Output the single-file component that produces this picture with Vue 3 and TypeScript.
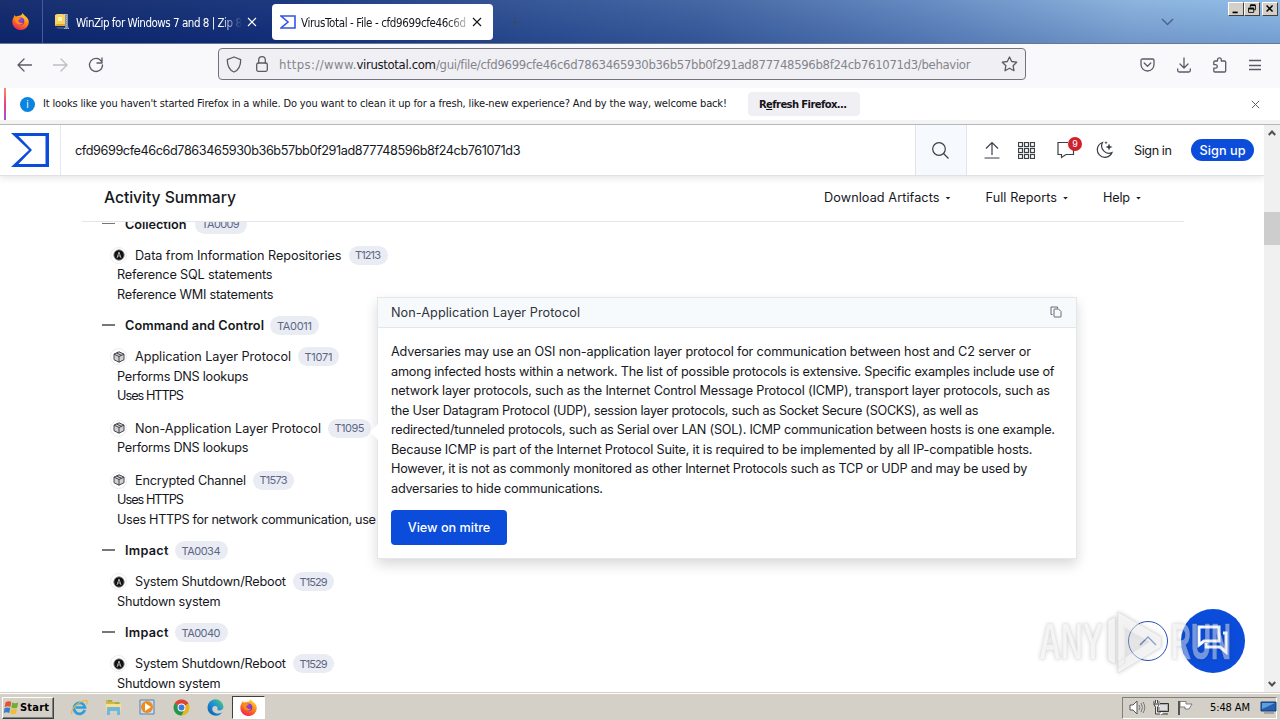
<script setup lang="ts">
import type { Directive } from 'vue'

interface Technique { icon: 'cube' | 'mark'; name: string; w: number; id: string; bw: number; gap: number; notes: [string, number][] }
interface Tactic { name: string; w: number; id: string; bw: number; gap: number; techniques: Technique[] }

// Tracks a label so that its glyphs fill the given width in pixels.
const vTrack: Directive<HTMLElement, number> = {
  mounted(el, { value }) {
    const natural = el.getBoundingClientRect().width
    const count = (el.textContent ?? '').length
    if (count > 1) el.style.letterSpacing = `${((value - natural) / (count - 1)).toFixed(3)}px`
    el.style.width = `${value}px`
  },
}

const reboot: Technique = { icon: 'mark', name: 'System Shutdown/Reboot', w: 151, id: 'T1529', bw: 41, gap: 7, notes: [['Shutdown system', 103.5]] }

const tactics: Tactic[] = [
  {
    name: 'Collection', w: 61.5, id: 'TA0009', bw: 52, gap: 8,
    techniques: [
      { icon: 'mark', name: 'Data from Information Repositories', w: 206.5, id: 'T1213', bw: 39, gap: 7, notes: [['Reference SQL statements', 155.5], ['Reference WMI statements', 156.5]] },
    ],
  },
  {
    name: 'Command and Control', w: 139, id: 'TA0011', bw: 49, gap: 6,
    techniques: [
      { icon: 'cube', name: 'Application Layer Protocol', w: 156, id: 'T1071', bw: 41, gap: 7, notes: [['Performs DNS lookups', 131.5], ['Uses HTTPS', 67]] },
      { icon: 'cube', name: 'Non-Application Layer Protocol', w: 186, id: 'T1095', bw: 43, gap: 7, notes: [['Performs DNS lookups', 131.5]] },
      { icon: 'cube', name: 'Encrypted Channel', w: 111, id: 'T1573', bw: 41, gap: 7, notes: [['Uses HTTPS', 67], ['Uses HTTPS for network communication, use', 259]] },
    ],
  },
  { name: 'Impact', w: 43.5, id: 'TA0034', bw: 53, gap: 6, techniques: [reboot] },
  { name: 'Impact', w: 43.5, id: 'TA0040', bw: 53, gap: 6, techniques: [reboot] },
]

const paragraph: [string, number][] = [
  ['Adversaries may use an OSI non-application layer protocol for communication between host and C2 server or', 640],
  ['among infected hosts within a network. The list of possible protocols is extensive. Specific examples include use of', 663.5],
  ['network layer protocols, such as the Internet Control Message Protocol (ICMP), transport layer protocols, such as', 659],
  ['the User Datagram Protocol (UDP), session layer protocols, such as Socket Secure (SOCKS), as well as', 587.5],
  ['redirected/tunneled protocols, such as Serial over LAN (SOL). ICMP communication between hosts is one example.', 664],
  ['Because ICMP is part of the Internet Protocol Suite, it is required to be implemented by all IP-compatible hosts.', 641.5],
  ['However, it is not as commonly monitored as other Internet Protocols such as TCP or UDP and may be used by', 636.5],
  ['adversaries to hide communications.', 212],
]

const menus: [string, number][] = [['Download Artifacts', 115.5], ['Full Reports', 71.5], ['Help', 27]]
</script>

<template>
  <div class="screen">
    <svg class="defs" width="0" height="0">
      <defs>
        <linearGradient id="flame" x1="0.8" y1="0" x2="0.3" y2="1"><stop offset="0" stop-color="#ffe23e" /><stop offset="0.45" stop-color="#ff8a16" /><stop offset="1" stop-color="#ee2050" /></linearGradient>
        <radialGradient id="globe" cx="0.5" cy="0.3" r="0.8"><stop offset="0" stop-color="#a244d8" /><stop offset="1" stop-color="#5b2ec0" /></radialGradient>
        <linearGradient id="wave" x1="0" y1="1" x2="1" y2="0"><stop offset="0" stop-color="#0c59a4" /><stop offset="0.5" stop-color="#1b8ed8" /><stop offset="1" stop-color="#54d06a" /></linearGradient>
        <symbol id="fox" viewBox="0 0 16 16">
          <path d="M8.600 2.200C9.300 1.400 9.500.8 10.200 0c.3 1.500 1.300 2.100 2.500 3.100 1.800 1.400 3.100 3 3.100 5.500A7.700 7.400 0 0 1 .3 8.600C.2 6.500 1 4.700 2 3.300l.2-1.500 1.500 1.400Z" fill="url(#flame)" />
          <circle cx="8" cy="7.800" r="3.500" fill="url(#globe)" />
          <path d="M2 4.500c1.300-1 2.800-.9 3.700 0l2.500.3c-.3 1.300-2.100 1.300-2.300 2.500.8 1.800 2.600 2.600 4.600 1.600-1.200 2.900-5.600 2.700-6.900-.4Z" fill="#ff8b1a" />
        </symbol>
        <symbol id="cross" viewBox="0 0 10 10"><path d="M1 1l8 8M9 1L1 9" fill="none" stroke="currentColor" stroke-width="1.100" /></symbol>
        <symbol id="sigma" viewBox="0 0 38 34"><path d="M0 0h38v34H0l18-17ZM7.500 3l13.500 14L7.500 31H34.500V3Z" fill="currentColor" fill-rule="evenodd" /></symbol>
      </defs>
    </svg>

    <div class="tabs">
      <div class="pinned"><svg width="17" height="17"><use href="#fox" /></svg></div>
      <div class="tab idle">
        <svg width="17" height="17" viewBox="0 0 17 17"><path d="M1 2h10v11H1Z" fill="#e2a92f" /><path d="M1 2l2-1h8v10H3l-2 1Z" fill="#f7d264" /><path d="M4 4h4v4H4Z" fill="#fff2ad" /><path d="M2 14h9v2H4Z" fill="#667995" opacity=".5" /><path d="M11 1h3v12l1 3h-4Z" fill="#7f90ac" /><path d="M12.500 1v14M9 1.500h4M10 15.500h6" stroke="#a9b5c8" stroke-dasharray="1 1" /></svg>
        <span class="tab-text"><span v-track="166">WinZip for Windows 7 and 8 | Zip 8</span></span>
        <svg width="10" height="10"><use href="#cross" /></svg>
      </div>
      <div class="tab active">
        <svg class="vt" width="16" height="14" viewBox="0 0 16 14"><path d="M1 1h14v12H1l7-6Z" fill="none" stroke="#3554e8" stroke-width="1.600" /></svg>
        <span class="tab-text"><span v-track="165">VirusTotal - File - cfd9699cfe46c6d</span></span>
        <svg width="10" height="10"><use href="#cross" /></svg>
      </div>
      <svg class="plus" width="10" height="10" viewBox="0 0 10 10"><path d="M5 0v10M0 5h10" stroke="#3b496c" stroke-width="1.200" /></svg>
      <svg class="tabs-more" width="13" height="8" viewBox="0 0 13 8"><path d="M1 1l5.500 5.500L12 1" fill="none" stroke="#4c648f" stroke-width="1.500" /></svg>
      <div class="window-buttons">
        <svg width="16" height="14" viewBox="0 0 16 14"><path d="M4 11h6" stroke="#000" stroke-width="2" /></svg>
        <svg width="16" height="14" viewBox="0 0 16 14"><path d="M6 5V3h6v5h-2M6 3h6M4 6h6v5H4Z" fill="none" stroke="#000" /><path d="M6 2.500h6M4 6.500h6" stroke="#000" stroke-width="2" /></svg>
        <svg width="16" height="14" viewBox="0 0 16 14"><path d="M4 3l7 7M11 3l-7 7" stroke="#000" stroke-width="1.800" /></svg>
      </div>
    </div>

    <div class="toolbar">
      <svg class="back" width="15" height="14" viewBox="0 0 15 14"><path d="M14.500 7H1M7 1L1 7l6 6" /></svg>
      <svg class="forward" width="15" height="14" viewBox="0 0 15 14"><path d="M0 7h14M8 1l6 6-6 6" /></svg>
      <svg class="reload" width="16" height="16" viewBox="0 0 16 16"><path d="M13.500 4.500A6.500 6.500 0 1 0 14.500 8M14 1v5H9" /></svg>
      <div class="address">
        <svg width="16" height="17" viewBox="0 0 16 17"><path d="M8 1l6.700 2.700C14.700 9.500 12.800 14 8 16 3.200 14 1.300 9.500 1.300 3.700Z" /></svg>
        <svg class="lock" width="12" height="16" viewBox="0 0 12 16"><rect x=".7" y="7" width="10.600" height="8.300" rx="1.500" /><path d="M2.700 7V4a3.300 3.300 0 0 1 6.600 0v3" /></svg>
        <span class="url"><span v-track="77.500">https://www.</span><b v-track="79.500">virustotal.com</b><span v-track="534.500">/gui/file/cfd9699cfe46c6d7863465930b36b57bb0f291ad877748596b8f24cb761071d3/behavior</span></span>
        <svg class="star" width="17" height="16" viewBox="0 0 17 16"><path d="M8.500 1l2.200 4.500 5 .7-3.600 3.500.9 5-4.500-2.400L4 14.700l.9-5L1.300 6.200l5-.7Z" /></svg>
      </div>
      <div class="tools">
        <svg width="15" height="14" viewBox="0 0 15 14"><path d="M2.500 1h10q1.500 0 1.500 1.500V6.500a6.500 6.500 0 0 1-13 0V2.500Q1 1 2.500 1ZM4.200 5l3.300 3.200L10.800 5" /></svg>
        <svg width="14" height="16" viewBox="0 0 14 16"><path d="M7 1v10M3 7l4 4 4-4M.7 12v1.500q0 1.500 1.500 1.500h9.600q1.500 0 1.500-1.500V12" /></svg>
        <svg width="15" height="16" viewBox="0 0 15 16"><path d="M5.500 4V2.700a1.900 1.900 0 0 1 3.800 0V4h3.200q1.200 0 1.200 1.200v8.600q0 1.200-1.200 1.200H3q-1.200 0-1.200-1.200v-2.600h1.700a1.600 1.600 0 0 0 0-3.600H1.800V5.200Q1.800 4 3 4Z" /></svg>
        <svg width="12" height="12" viewBox="0 0 12 12"><path d="M0 1.500h12M0 6.500h12M0 10.500h12" /></svg>
      </div>
    </div>

    <div class="notice">
      <div class="info">i</div>
      <span class="message" v-track="684">It looks like you haven't started Firefox in a while. Do you want to clean it up for a fresh, like-new experience? And by the way, welcome back!</span>
      <div class="refresh"><span v-track="88">R<u>e</u>fresh Firefox...</span></div>
      <svg width="9" height="9"><use href="#cross" /></svg>
    </div>
    <div class="seam"></div>

    <div class="page">
      <div class="site">
        <header class="top">
          <div class="logo"><svg width="38" height="34"><use href="#sigma" /></svg></div>
          <span class="hash" v-track="445.500">cfd9699cfe46c6d7863465930b36b57bb0f291ad877748596b8f24cb761071d3</span>
          <div class="search"><svg width="17" height="17" viewBox="0 0 17 17"><circle cx="7" cy="7" r="6.300" /><path d="M11.500 11.500l5 5" /></svg></div>
          <svg class="up" width="16" height="18" viewBox="0 0 16 18"><path d="M8 14V1.500M2 7.500l6-6 6 6M.5 17h15" /></svg>
          <svg class="grid" width="17" height="17" viewBox="0 0 17 17"><g v-for="r in 3" :key="r"><rect v-for="c in 3" :key="c" :x="c * 6 - 5.500" :y="r * 6 - 5.500" width="4" height="4" /></g></svg>
          <div class="comments">
            <svg width="18" height="18" viewBox="0 0 18 18"><path d="M11 1.500H1v12h3.500v3L9 13.500h7.500V9" /></svg>
            <span class="count">9</span>
          </div>
          <svg class="moon" width="17" height="18" viewBox="0 0 17 18"><path d="M6.500 1.500A7.600 7.600 0 1 0 16 11.500 7.300 7.300 0 0 1 6.500 1.500Z" /><path class="solid" d="M13 2.500l1 2.500 2.500 1L14 7l-1 2.500L12 7 9.500 6 12 5ZM10 0l.5 1.200 1.200.5-1.200.5L10 3.400l-.5-1.200-1.200-.5 1.200-.5Z" /></svg>
          <span class="signin" v-track="38">Sign in</span>
          <div class="signup"><span v-track="46">Sign up</span></div>
        </header>

        <div class="summary">
          <span class="title" v-track="132">Activity Summary</span>
          <div class="menus">
            <div v-for="[label, w] in menus" :key="label" class="menu"><span v-track="w">{{ label }}</span><i class="caret"></i></div>
          </div>
        </div>

        <main class="behavior">
          <section v-for="t in tactics" :key="t.id" class="tactic">
            <div class="tactic-row">
              <i class="dash"></i>
              <span class="tactic-name" v-track="t.w">{{ t.name }}</span>
              <div class="badge" :style="{ width: t.bw + 'px', marginLeft: t.gap + 'px' }"><span v-track="t.bw - 14">{{ t.id }}</span></div>
            </div>
            <div v-for="q in t.techniques" :key="q.id" class="technique">
              <div class="technique-row">
                <span class="source">
                  <svg v-if="q.icon === 'cube'" width="12" height="12" viewBox="0 0 12 12"><path d="M6 .8l5 2.300v5.600l-5 2.500-5-2.500V3.100Z" fill="#d0d0d3" /><path d="M1 3.100l5 2.400 5-2.400M6 5.500v5.700M3.500 2l5 2.300" /></svg>
                  <svg v-else width="12" height="12" viewBox="0 0 12 12"><circle cx="6" cy="6" r="5.200" class="disc" /><path class="letter" d="M4 9l2-6 2 6M4.700 7h2.600" /></svg>
                </span>
                <span v-track="q.w">{{ q.name }}</span>
                <div class="badge" :style="{ width: q.bw + 'px', marginLeft: q.gap + 'px' }"><span v-track="q.bw - 13">{{ q.id }}</span></div>
              </div>
              <div v-for="[note, w] in q.notes" :key="note" class="note"><span v-track="w">{{ note }}</span></div>
            </div>
          </section>
        </main>

        <aside class="popover">
          <div class="popover-head">
            <span v-track="189">Non-Application Layer Protocol</span>
            <svg width="12" height="12" viewBox="0 0 12 12"><path d="M4 3.500q0-.5.500-.5H8.500L11 5.500v5q0 .5-.5.500h-6q-.5 0-.5-.5ZM2.500 8.500H1V1h6.500v1.500" /></svg>
          </div>
          <div class="popover-body">
            <div v-for="[line, w] in paragraph" :key="line" class="line"><span v-track="w">{{ line }}</span></div>
            <div class="mitre"><span v-track="82.500">View on mitre</span></div>
          </div>
          <i class="beak"></i>
        </aside>

        <div class="chat"><svg width="32" height="30" viewBox="0 0 32 30"><path d="M2 2h20v14H7l-5 4Z" /><path d="M26 8h3v19l-6-5H9v-4" /></svg></div>
        <div class="to-top"><svg width="18" height="10" viewBox="0 0 18 10"><path d="M1 9l8-8 8 8" /></svg></div>
        <svg class="watermark" width="200" height="70" viewBox="0 0 200 70">
          <text x="4" y="51" textLength="64" lengthAdjust="spacingAndGlyphs">ANY</text>
          <text x="136" y="51" textLength="60" lengthAdjust="spacingAndGlyphs">RUN</text>
          <path d="M73 13l7-4v47l-7-4ZM83 4l43 25v10L83 65V54l31-20-24-14v35l-7 5Z" />
          <path class="play" d="M88 17l25 17-25 17Z" />
        </svg>
      </div>
      <div class="scrollbar">
        <svg class="arrow" width="8" height="6" viewBox="0 0 8 6"><path d="M.8 5L4 1.500 7.200 5" /></svg>
        <div class="thumb"></div>
        <svg class="arrow down" width="8" height="6" viewBox="0 0 8 6"><path d="M.8 1L4 4.500 7.200 1" /></svg>
      </div>
    </div>

    <footer class="taskbar">
      <div class="start">
        <svg width="15" height="15" viewBox="0 0 15 15"><path d="M1.500 2.500Q4.500.5 7.300 2L6.400 7Q3.500 5.500.7 7.300Z" fill="#e5532d" /><path d="M8.200 2.500q3 1.500 6 0L13.300 7.500q-3 1.700-6 0Z" fill="#73ad35" /><path d="M.5 8.300Q3.500 6.700 6.200 8l-.9 5Q2.500 11.500-.2 13Z" fill="#377fc5" /><path d="M7.100 8.500q3 1.700 6 0l-.9 5q-3 1.600-6 0Z" fill="#f1bd35" /></svg>
        <span v-track="29">Start</span>
      </div>
      <svg class="app" width="17" height="17" viewBox="0 0 17 17"><path d="M13.800 11A5.500 5.500 0 1 1 14 8.500H5" fill="none" stroke="#2d9edc" stroke-width="2.700" /><path d="M1 15C-1 12 6 3 14 1.500c3-.5 2.500 2 1 4" fill="none" stroke="#e9b93d" stroke-width="1.200" /></svg>
      <svg class="app" width="17" height="17" viewBox="0 0 17 17"><path d="M1 3V1h6l1 2h7v5H1Z" fill="#d9b248" /><path d="M1 5h15v7H1Z" fill="#f7df8d" /><path d="M3 2h4M10 4h4" stroke="#78b850" stroke-width="1.500" /><path d="M2 16V9q0-1 1-1h11q1 0 1 1v7h-3v-4H5v4Z" fill="#6fb8dc" /></svg>
      <svg class="app" width="17" height="17" viewBox="0 0 17 17"><path d="M1 1h14v14H1Z" fill="#c8dff1" stroke="#4c83b9" /><circle cx="8" cy="8" r="6" fill="#f28a18" /><path d="M6 4l6 4-6 4Z" fill="#fff" /></svg>
      <svg class="app" width="17" height="17" viewBox="0 0 16 16"><circle cx="8" cy="8" r="7.500" fill="#e7b719" /><path d="M8 8L1.500 4.300A7.500 7.500 0 0 1 14.500 4.300Z" fill="#db4437" /><path d="M8 8L1.500 4.300A7.500 7.500 0 0 0 8 15.500L11 9.500Z" fill="#23964d" /><circle cx="8" cy="8" r="3.700" fill="#fff" /><circle cx="8" cy="8" r="2.800" fill="#3e79e8" /></svg>
      <svg class="app" width="17" height="17" viewBox="0 0 16 16"><path d="M.5 8a7.500 7.500 0 0 1 15-.5c0 3-4.500 4.200-5.800 2.500.8-1.500 0-3.500-2.200-3.500-2.500 0-3.500 3.200-1.500 5.500 2.200 2.300 5.500 2 8.300.4A7.600 7.600 0 0 1 .5 8Z" fill="url(#wave)" /></svg>
      <div class="running"><svg width="17" height="17"><use href="#fox" /></svg></div>
      <div class="tray">
        <svg width="17" height="15" viewBox="0 0 17 15"><path d="M1 5h3l4-4v13L4 10H1Z" fill="#fff" stroke="#555" /><path d="M10 5q1.500 2.500 0 5M12 3q3 4.500 0 9M14 2q3.500 5.500 0 11" fill="none" stroke="#777" /></svg>
        <svg width="17" height="15" viewBox="0 0 17 15"><path d="M5.500 3.500h10v8h-10ZM8 14h7" fill="#aaa" stroke="#333" /><path d="M7 5h7v5H7Z" fill="#ddd" /><path d="M1 2h5v4H4.500v7h5" fill="none" stroke="#fff" stroke-width="2" /><path d="M1 1v4l1.500 2v7H7M6 1v4L4.500 7v5H8M1 4h5M2.500 0v3M4.500 0v3" fill="none" stroke="#333" stroke-width=".9" /></svg>
        <svg width="17" height="15" viewBox="0 0 17 15"><path d="M2 1v14" stroke="#555" stroke-width="2" /><path d="M3 1.500h6V4h6l-3 5H8V7H3Z" fill="#fff" stroke="#666" stroke-width=".8" /></svg>
        <span v-track="40">5:48 AM</span>
        <svg width="17" height="13" viewBox="0 0 17 13"><path d="M1 1h15v9H1Z" fill="#245fae" stroke="#153c79" /><path d="M2 2h13L2 8Z" fill="#5f9de0" /><path d="M4 12h10" stroke="#777" /></svg>
      </div>
    </footer>
  </div>
</template>

<style>
body { margin: 0; overflow: hidden; }
</style>

<style scoped>
* { box-sizing: border-box; }
.screen { width: 1280px; height: 720px; display: flex; flex-direction: column; overflow: hidden; background: #fff; color: #15171c; font: 11px 'DejaVu Sans Condensed', 'DejaVu Sans', sans-serif; font-stretch: condensed; }
.defs { position: absolute; }
svg { display: block; flex: none; }
span, b { white-space: pre; flex: none; }
span[style], b[style] { display: inline-block; }

.tabs { height: 44px; flex: none; display: flex; align-items: center; border-bottom: 1px solid #6d7691; background: linear-gradient(180deg, rgba(255,255,255,.05), rgba(8,32,110,.18)), linear-gradient(100deg, #0c2568 0%, #122f78 22%, #2b4d91 40%, #3c609f 55%, #5f86bf 72%, #87b0dc 88%, #8bb9e6 100%); }
.pinned { width: 43px; height: 43px; padding: 13px 0 0 12px; border-right: 1px solid #465d93; }
.tab { height: 36px; display: flex; align-items: center; }
.idle { width: 229px; padding-left: 11px; color: #fff; }
.idle .tab-text { margin: 0 5px 0 5px; width: 166px; -webkit-mask-image: linear-gradient(90deg, #000 87%, transparent 100%); mask-image: linear-gradient(90deg, #000 87%, transparent 100%); }
.tab-text { overflow: hidden; padding: 3px 0 1px; font-size: 11.500px; }
.active { width: 221px; background: #fff; border-radius: 4px; padding-left: 8px; color: #15141a; }
.active .tab-text { margin: 0 6px 0 5px; width: 165px; -webkit-mask-image: linear-gradient(90deg, #000 88%, rgba(0,0,0,.3) 100%); mask-image: linear-gradient(90deg, #000 88%, rgba(0,0,0,.3) 100%); }
.plus { margin-left: 17px; }
.tabs-more { margin-left: 641px; }
.window-buttons { display: flex; align-self: flex-start; margin: 2px 0 0 54px; }
.window-buttons svg { width: 16px; height: 14px; background: #d4d0c8; border: 1px solid; border-color: #fff #404040 #404040 #fff; }
.window-buttons svg:last-child { margin-left: 2px; }

.toolbar { height: 44px; flex: none; display: flex; align-items: center; background: #f9f9fb; padding: 0 17px; }
.toolbar svg { fill: none; stroke: #5b5b66; stroke-width: 1.300; stroke-linecap: round; stroke-linejoin: round; }
.toolbar .forward { margin-left: 21px; stroke: #bdbdc4; }
.toolbar .reload { margin: -2px 0 0 20px; }
.toolbar .back { margin-top: -3px; }
.toolbar .forward { margin-top: -3px; }
.address { width: 808px; height: 32px; margin: -4px 0 0 114px; display: flex; align-items: center; border: 1px solid #73737d; border-radius: 4px; background: #f0f0f4; padding-left: 7px; }
.lock { margin-left: 14px; }
.url { margin-left: 11px; width: 691px; font-size: 13px; color: #84848c; display: flex; }
.url b { font-weight: 400; color: #15141a; }
.star { margin-left: 31px; }
.tools { display: flex; align-items: center; margin: -3px 0 0 114px; gap: 21.700px; }

.notice { height: 32px; width: 1272px; margin-left: 4px; flex: none; display: flex; align-items: center; background: #fff; border-left: 2px solid; border-image: linear-gradient(#ff9060, #ee3f83 50%, #9059d8) 1; padding-left: 14px; color: #15141a; }
.info { width: 15px; height: 15px; border-radius: 50%; background: #0a84e0; color: #fff; text-align: center; line-height: 15px; margin-right: 8px; font-size: 10px; }
.message { margin-top: -1px; }
.refresh { width: 112px; height: 24px; margin: 0 391px 0 21px; background: #f0f0f4; border-radius: 4px; display: flex; align-items: center; justify-content: center; font: bold 10px 'DejaVu Sans', sans-serif; padding-right: 2px; }
.notice svg { color: #5b5b66; }
.seam { height: 5px; flex: none; background: #f3f3f4; border-bottom: 1px solid #b8b8ba; }

.page { height: 567px; flex: none; display: flex; }
.site { width: 1264px; height: 567px; position: relative; overflow: hidden; background: #fff; font: 12.700px Inter, 'Liberation Sans', sans-serif; color: #16181d; }
.top { height: 51px; position: relative; display: flex; align-items: center; border-bottom: 1px solid #dfe1e4; box-shadow: 0 2px 7px rgba(0,0,0,.11); background: #fff; }
.top svg { fill: none; stroke: #3b3f46; stroke-width: 1.200; }
.logo { width: 61px; height: 50px; padding: 8px 0 0 11px; border-right: 1px solid #e3e9f4; color: #0b4dda; }
.top .logo svg { stroke: none; fill: #0b4dda; }
.hash { margin-left: 14px; }
.search { width: 52px; height: 50px; margin-left: 394.500px; border: solid #dfe5eb; border-width: 0 1px; background: #f6fafe; padding: 17px 16px; }
.up { margin-left: 17px; }
.grid { margin-left: 18px; }
.comments { position: relative; margin-left: 22px; width: 18px; }
.count { position: absolute; left: 11px; top: -4px; width: 14px; height: 14px; border-radius: 50%; background: #cf202b; color: #fff; font-size: 9px; line-height: 14px; text-align: center; }
.moon { margin-left: 21px; }
.top .moon .solid { fill: #3b3f46; stroke: none; }
.signin { margin-left: 21px; }
.signup { width: 63px; height: 22px; margin-left: 19px; border-radius: 11px; background: #0b4dda; color: #fff; display: flex; align-items: center; justify-content: center; font-weight: 500; }

.summary { height: 46px; width: 1102px; margin-left: 82px; padding: 0 42px 3px 22px; display: flex; align-items: center; justify-content: space-between; border-bottom: 1px solid #e3e5e7; }
.title { font-size: 15.700px; font-weight: 500; }
.menus { display: flex; gap: 34px; }
.menu { display: flex; align-items: center; }
.caret { margin: 2px 0 0 5px; width: 7px; height: 3px; background: #222; clip-path: polygon(10% 0, 90% 0, 50% 100%); }

.behavior { height: 470px; overflow: hidden; padding-left: 102px; }
.tactic { margin-top: 11.500px; }
.tactic:first-child { margin-top: -8px; }
.tactic-row, .technique-row { height: 20px; display: flex; align-items: center; }
.dash { width: 13px; height: 1.500px; background: #777; margin: -1px 10px 0 0; }
.tactic-name { font-weight: 600; }
.technique { margin-top: 12.500px; padding-left: 15px; }
.tactic-row + .technique { margin-top: 11px; }
.badge { flex: none; height: 19px; border-radius: 10px; background: #eaecf4; display: flex; align-items: center; justify-content: center; color: #5d6785; font-size: 11px; }
.source { width: 17px; height: 17px; margin: 0 8px 0 -7px; border: 1px solid #ececee; border-radius: 50%; display: flex; align-items: center; justify-content: center; }
.source svg { fill: none; stroke: #33353a; stroke-width: .9; }
.source .disc { fill: #111; stroke: #888; }
.source .letter { stroke: #bbb; }
.note { height: 19.500px; line-height: 19.500px; }

.popover { position: absolute; left: 377px; top: 172px; width: 700px; height: 262px; background: #fff; border: 1px solid #e4e6e8; box-shadow: 0 6px 12px rgba(0,0,0,.15); }
.popover-head { height: 30px; display: flex; align-items: center; justify-content: space-between; padding: 0 14px 1px 13px; background: #f7fafd; border-bottom: 1px solid #e4e7ea; color: #30343a; }
.popover-head svg { fill: none; stroke: #555b64; stroke-width: .9; }
.popover-body { padding: 14px 13px; }
.line { height: 19.500px; line-height: 19.500px; }
.mitre { width: 116px; height: 35px; margin-top: 12px; border-radius: 4px; background: #0b4dda; color: #fff; display: flex; align-items: center; justify-content: center; font-weight: 500; }
.beak { position: absolute; left: -8px; top: 126px; width: 8px; height: 16px; background: #fff; clip-path: polygon(0 50%, 100% 0, 100% 100%); }

.chat { position: absolute; left: 1181px; top: 484px; width: 64px; height: 64px; border-radius: 50%; background: #0b4dda; padding: 16px 0 0 16px; }
.chat svg { fill: none; stroke: #fff; stroke-width: 3; }
.to-top { position: absolute; left: 1128px; top: 496px; width: 40px; height: 40px; border: 1px solid #2950b5; border-radius: 50%; padding: 14px 0 0 10px; background: #fff; }
.to-top svg { fill: none; stroke: #2950b5; stroke-width: 1.300; }
.watermark { position: absolute; left: 1035px; top: 483px; overflow: visible; filter: drop-shadow(0 0 2px rgba(0,0,0,.38)); opacity: .66; }
.watermark text { font: bold 50px 'Liberation Sans', sans-serif; fill: rgba(255,255,255,.65); stroke: rgba(205,205,205,.7); stroke-width: .7; }
.watermark path { fill: rgba(255,255,255,.7); stroke: rgba(205,205,205,.7); stroke-width: 1; }
.watermark .play { fill: rgba(225,225,225,.5); stroke: none; }

.scrollbar { width: 16px; height: 567px; display: flex; flex-direction: column; align-items: center; background: #f0f0f0; padding: 5px 0; }
.arrow { fill: none; stroke: #505050; stroke-width: 2; }
.thumb { width: 16px; height: 33px; margin-top: 76px; background: #cdcdcd; }
.down { margin-top: auto; }

.taskbar { height: 28px; flex: none; display: flex; align-items: center; padding: 3px 3px 1px 2px; background: #d4d0c8; border-top: 1px solid #d4d0c8; box-shadow: inset 0 1px #fff; color: #000; }
.start { width: 52px; height: 22px; display: flex; align-items: center; gap: 1px; padding-left: 1px; border: 1px solid; border-color: #fff #404040 #404040 #fff; box-shadow: inset -1px -1px #808080; font: bold 11px 'DejaVu Sans Condensed', 'DejaVu Sans', sans-serif; font-stretch: condensed; }
.app { margin-left: 17px; }
.running { width: 33px; height: 23px; margin-left: 8px; padding: 2px 0 0 7px; background: #fff; border: 1px solid; border-color: #404040 #fff #fff #404040; }
.tray { width: 155px; height: 22px; margin-left: auto; display: flex; align-items: center; border: 1px solid; border-color: #808080 #fff #fff #808080; padding: 0 0 0 6px; }
.tray svg + svg { margin-left: 7px; }
.tray span { margin: 0 10px 0 16px; }
</style>
